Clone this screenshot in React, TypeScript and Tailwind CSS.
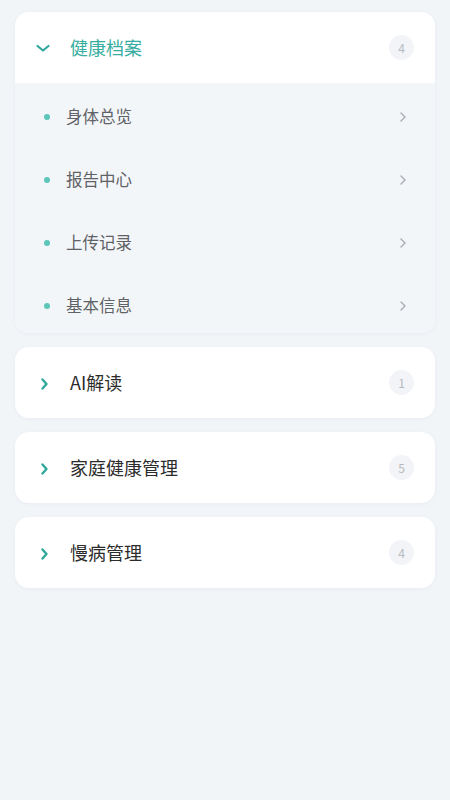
import { useState } from "react";

type Section = {
  title: string;
  count: number;
  items: string[];
};

const sections: Section[] = [
  { title: "健康档案", count: 4, items: ["身体总览", "报告中心", "上传记录", "基本信息"] },
  { title: "AI解读", count: 1, items: ["智能解读"] },
  { title: "家庭健康管理", count: 5, items: [] },
  { title: "慢病管理", count: 4, items: [] },
];

function ChevronDown() {
  return (
    <svg width="16" height="16" viewBox="0 0 16 16" fill="none">
      <path d="M2.5 6l5.5 4.5 5.5-4.5" stroke="#2fa89b" strokeWidth="2.2" strokeLinecap="round" strokeLinejoin="round" />
    </svg>
  );
}

function ChevronRight({ muted }: { muted?: boolean }) {
  if (muted) {
    return (
      <svg width="10" height="14" viewBox="0 0 10 14" fill="none">
        <path d="M3 3l4 4-4 4" stroke="#a9adb2" strokeWidth="1.4" strokeLinecap="round" strokeLinejoin="round" />
      </svg>
    );
  }
  return (
    <svg width="12" height="16" viewBox="0 0 12 16" fill="none" className="mt-[3px] ml-[3px]">
      <path d="M3.5 3.5l4 4.5-4 4.5" stroke="#2fa89b" strokeWidth="2.4" strokeLinecap="round" strokeLinejoin="round" />
    </svg>
  );
}

export default function App() {
  const [open, setOpen] = useState<number | null>(0);

  return (
    <div
      className="min-h-[800px] w-full bg-[#f2f5f8] px-[15px] pt-[12px] flex flex-col gap-[14px]"
      style={{ fontFamily: '"Noto Sans CJK SC", "Noto Sans", sans-serif' }}
    >
      {sections.map((s, i) => {
        const isOpen = open === i;
        return (
          <div
            key={s.title}
            className="rounded-[14px] bg-white overflow-hidden shadow-[0_1px_4px_rgba(30,60,90,0.05)]"
          >
            <button
              onClick={() => setOpen(isOpen ? null : i)}
              className="w-full h-[71px] flex items-center pl-[15px] pr-[20px] text-left"
            >
              <span className="w-[26px] mr-[14px] flex items-center justify-center">
                {isOpen ? <ChevronDown /> : <ChevronRight />}
              </span>
              <span
                className={
                  isOpen
                    ? "flex-1 text-[18px] text-[#37ada1]"
                    : "flex-1 text-[18px] text-[#2c2c2c]"
                }
              >
                {s.title}
              </span>
              <span className="w-[25px] h-[25px] mr-[1px] rounded-full bg-[#f2f4f7] flex items-center justify-center text-[12px] text-[#b6babf]">
                {s.count}
              </span>
            </button>
            {isOpen && (
              <div className="bg-[#f3f6f9] pt-[2px]">
                {s.items.map((item) => (
                  <div key={item} className="h-[63px] last:mb-[-4px] flex items-center pl-[29px] pr-[27px]">
                    <span className="w-[6px] h-[6px] rounded-full bg-[#5cc7b8] mr-[16px]" />
                    <span className="flex-1 text-[16.5px] text-[#5f6266]">{item}</span>
                    <ChevronRight muted />
                  </div>
                ))}
              </div>
            )}
          </div>
        );
      })}
    </div>
  );
}
